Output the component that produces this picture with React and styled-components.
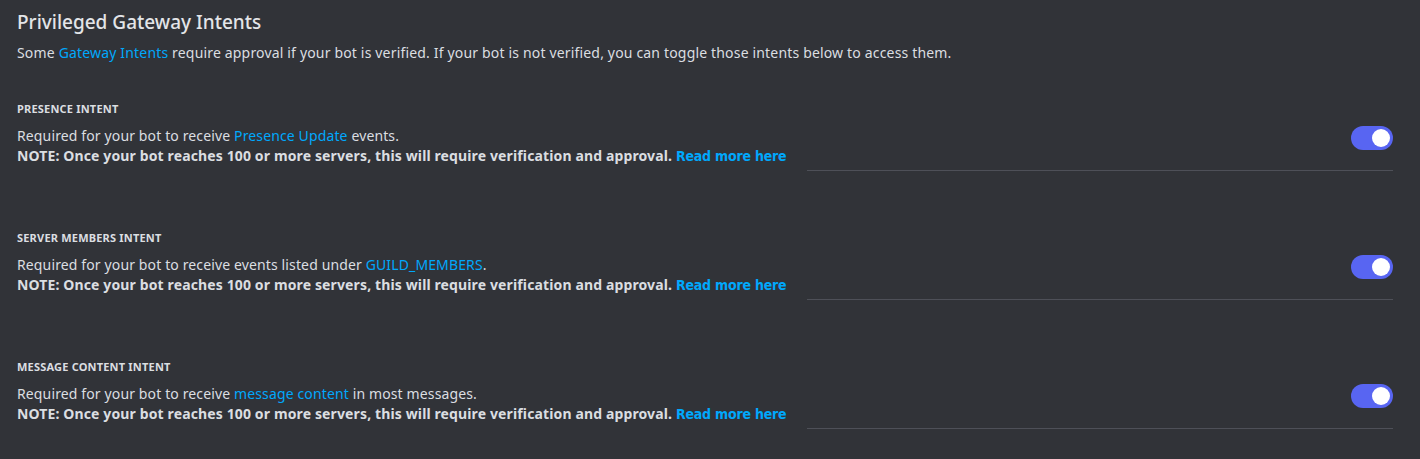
import React from 'react';
import styled, { createGlobalStyle } from 'styled-components';

const GlobalStyle = createGlobalStyle`
  html, body {
    margin: 0;
    padding: 0;
    background: #313338;
  }
  body {
    font-family: "Noto Sans", "Open Sans", sans-serif;
    color: #dbdee1;
  }
`;

const link = "#00a8fc";

const Page = styled.main`
  width: 1420px;
  height: 459px;
  box-sizing: border-box;
  padding: 9px 27px 0 17px;
  background: #313338;
  overflow: hidden;
`;

const Title = styled.h2`
  margin: 0;
  font-size: 19px;
  font-weight: 500;
  line-height: 26px;
  color: #e3e5e8;
`;

const Lead = styled.p`
  margin: 8px 0 0;
  font-size: 14px;
  line-height: 20px;
  letter-spacing: 0.17px;
  color: #dbdee1;
`;

const Link = styled.a`
  color: ${link};
  text-decoration: none;
`;

const StrongLink = styled.a`
  color: ${link};
  text-decoration: none;
  font-family: "DejaVu Sans", sans-serif;
  font-stretch: condensed;
  font-weight: 700;
  letter-spacing: -0.2px;
`;

const Intent = styled.section`
  margin-top: ${p => p.first ? 38 : 59}px;
`;

const Label = styled.h3`
  margin: 0 0 9px;
  font-size: 11px;
  line-height: 16px;
  font-weight: 700;
  letter-spacing: 0.2px;
  text-transform: uppercase;
  color: #dbdee1;
`;

const Row = styled.div`
  display: flex;
  gap: 21px;
`;

const Copy = styled.div`
  font-size: 14px;
  line-height: 20px;
  letter-spacing: 0.13px;
`;

const Note = styled.div`
  font-weight: 700;
  color: #dbdee1;
`;

const Side = styled.div`
  flex: 1;
  display: flex;
  flex-direction: column;
  align-items: flex-end;
  border-bottom: 1px solid #4e5058;
  height: 44px;
`;

const Toggle = styled.div`
  width: 42px;
  height: 24px;
  border-radius: 12px;
  background: #5865f2;
  display: flex;
  align-items: center;
  justify-content: flex-end;
  padding: 0 3px;
  box-sizing: border-box;
`;

const Knob = styled.span`
  width: 18px;
  height: 18px;
  border-radius: 50%;
  background: #fff;
`;

const intents = [
  { label: 'Presence Intent', before: 'Required for your bot to receive ', link: 'Presence Update', after: ' events.' },
  { label: 'Server Members Intent', before: 'Required for your bot to receive events listed under ', link: 'GUILD_MEMBERS', after: '.' },
  { label: 'Message Content Intent', before: 'Required for your bot to receive ', link: 'message content', after: ' in most messages.' },
];

export default function App() {
  return (
    <>
      <GlobalStyle />
      <Page>
        <Title>Privileged Gateway Intents</Title>
        <Lead>
          Some <Link>Gateway Intents</Link> require approval if your bot is verified. If your bot is not verified, you can toggle those intents below to access them.
        </Lead>
        {intents.map((it, i) => (
          <Intent key={it.label} first={i === 0}>
            <Label>{it.label}</Label>
            <Row>
              <Copy>
                <div>{it.before}<Link>{it.link}</Link>{it.after}</div>
                <Note>
                  NOTE: Once your bot reaches 100 or more servers, this will require verification and approval. <StrongLink>Read more here</StrongLink>
                </Note>
              </Copy>
              <Side>
                <Toggle><Knob /></Toggle>
              </Side>
            </Row>
          </Intent>
        ))}
      </Page>
    </>
  );
}
